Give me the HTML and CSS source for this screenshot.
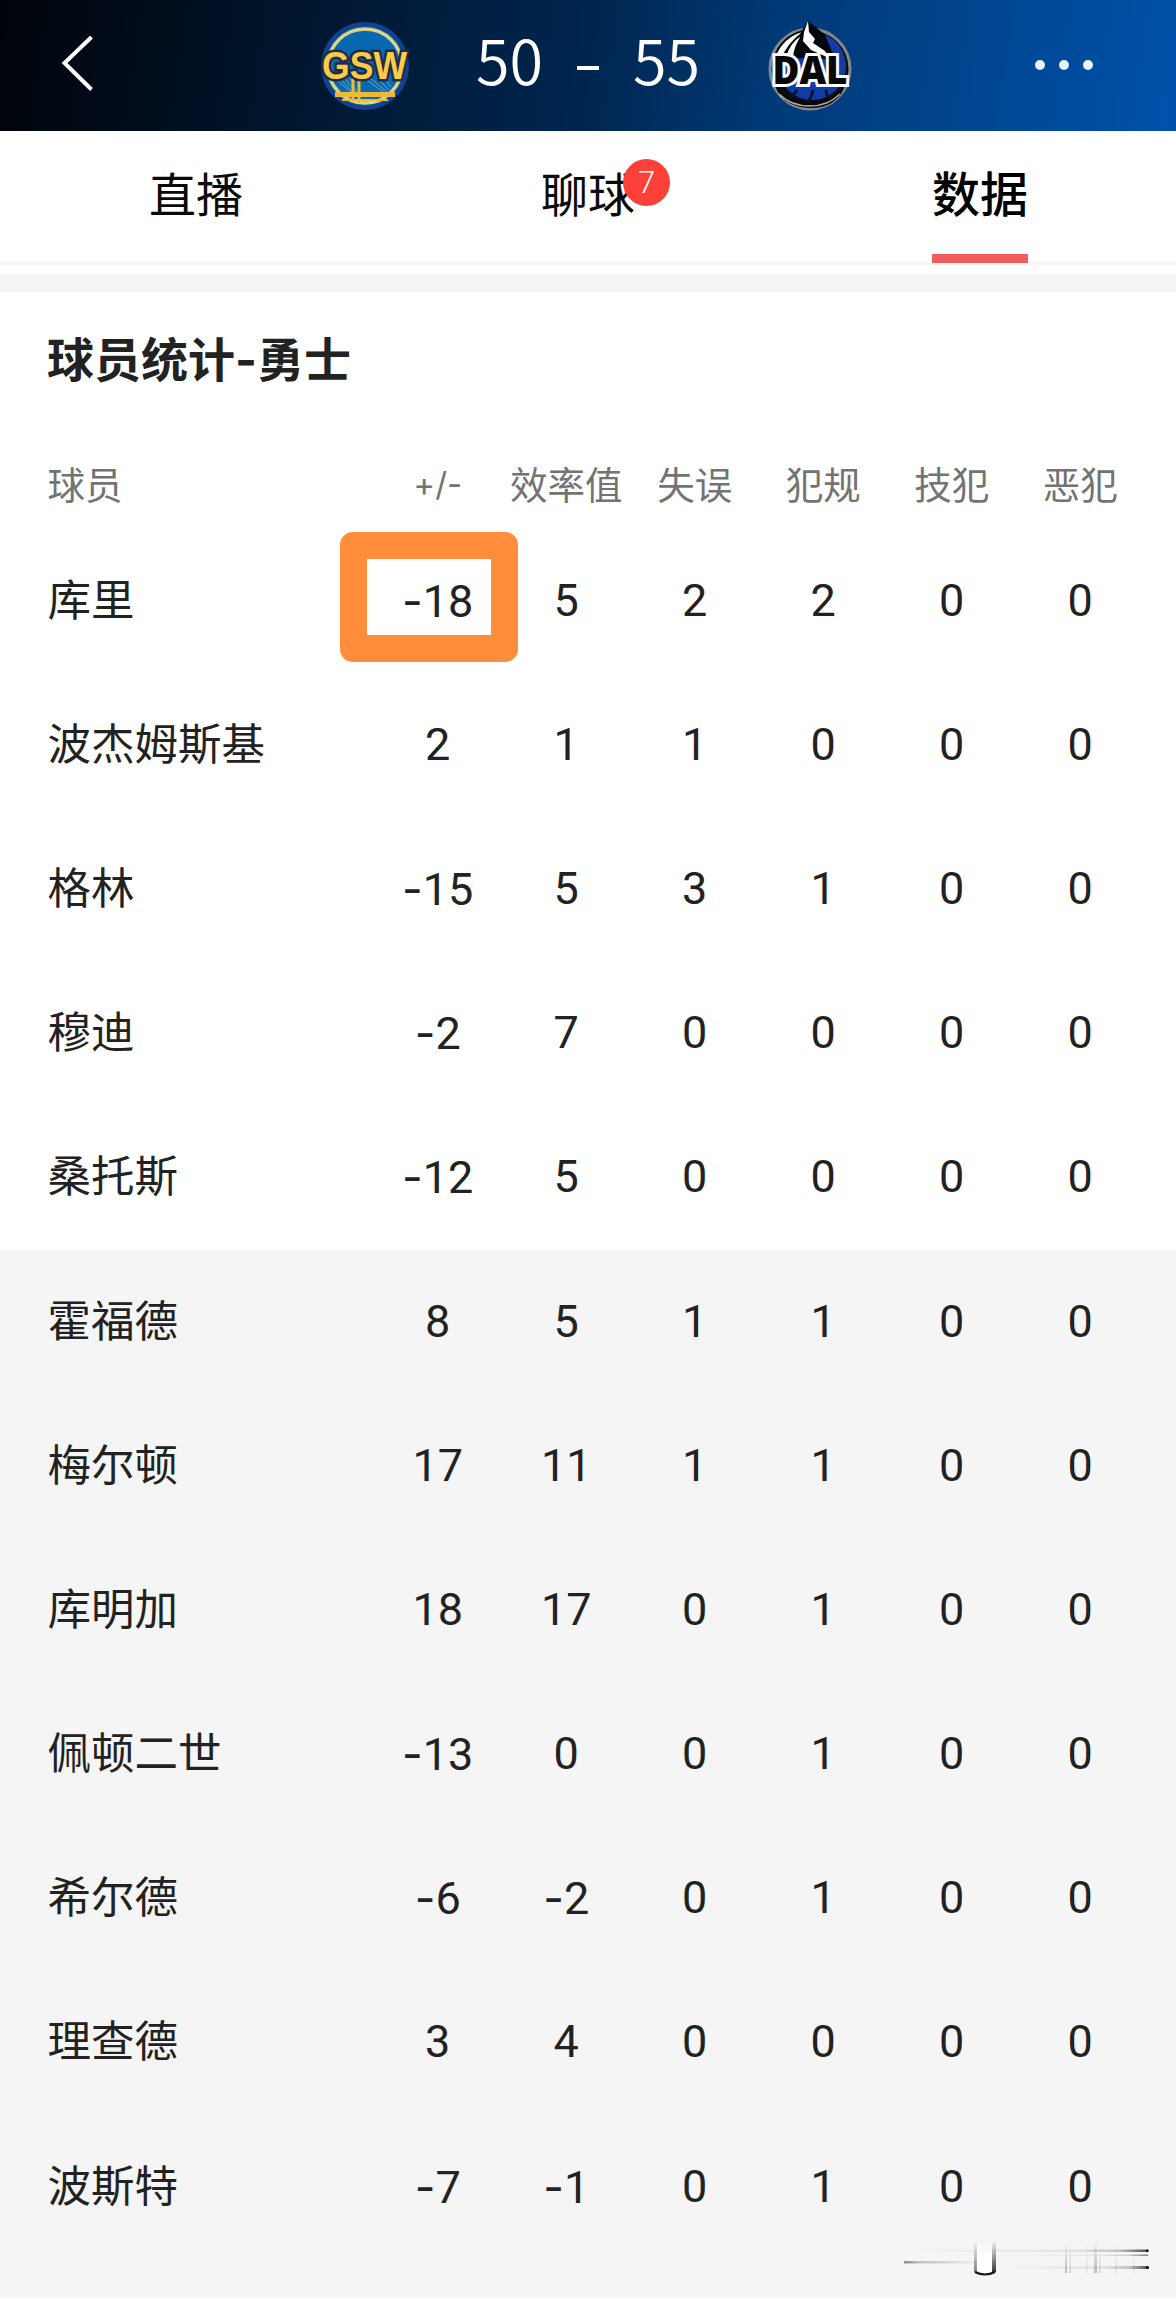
FILE: index.html
```html
<!DOCTYPE html>
<html lang="zh-CN">
<head>
  <meta charset="UTF-8">
  <meta name="viewport" content="width=device-width, initial-scale=1.0">
  <title>球员统计</title>
  <link rel="stylesheet" href="styles.css">
</head>
<body>
  <header class="topbar">
    <svg class="back" width="36" height="60" viewBox="0 0 36 60">
      <path d="M31.500 1L4.500 27L31.500 53.500" fill="none" stroke="#fff" stroke-width="4"/>
    </svg>

    <svg class="logo gsw" width="94" height="90" viewBox="-2 0 94 90">
      <circle cx="45" cy="45" r="44" fill="#0f4391"/>
      <circle cx="45" cy="45" r="40" fill="#17538d"/>
      <circle cx="45" cy="45" r="37" fill="#0869b1" stroke="#d9d58a" stroke-width="3.500"/>
      <path d="M17 59L34 74M20 57L35 74M25 57L37 74M30 57L38 74M44 57L66 73M50 57L67 71M57 57L69 69M64 57L71 66" stroke="#6da7a8" stroke-width="1"/>
      <path d="M15 71H75V76H15Z" fill="#efb938"/>
      <path d="M33 57V81M39 57V82" stroke="#efb938" stroke-width="3"/>
      <path d="M22 79H68" stroke="#efb938" stroke-width="2"/>
      <text x="44.500" y="57.500" text-anchor="middle" textLength="85" lengthAdjust="spacingAndGlyphs" class="gsw-text">GSW</text>
    </svg>

    <div class="score"><span>50</span><i class="score-dash"></i><span>55</span></div>

    <svg class="logo dal" width="86" height="92" viewBox="0 0 86 92">
      <circle cx="43" cy="49" r="40" fill="#0b0d14" stroke="#85878b" stroke-width="3"/>
      <circle cx="45" cy="46" r="34" fill="#103da4"/>
      <path d="M7 38Q13 16 36 10L39 36L18 38Z" fill="#05070e"/>
      <path d="M9 36Q16 18 35 12Q20 24 15 37ZM19 37Q23 23 34 16Q27 26 26 37Z" fill="#fff"/>
      <path d="M34 12L41 1L50 8L58 15L67 36L60 39L28 38Z" fill="#05070e"/>
      <path d="M41 1L37 12L36 21L44 30L62 38L58 31L46 23L48 19L42 12Z" fill="#fff"/>
      <path d="M46 70Q44 80 38 85M30 70Q26 77 18 80M59 70Q59 77 65 82" fill="none" stroke="#071233" stroke-width="3"/>
      <path d="M8 66Q20 81 43 82Q66 81 78 66Q70 88 43 88Q16 87 8 66Z" fill="#07080c"/>
      <path d="M12 74Q24 86 43 86Q61 86 73 74" fill="none" stroke="#b6aaa9" stroke-width="1.500"/>
      <text x="43" y="64" text-anchor="middle" textLength="75" lengthAdjust="spacingAndGlyphs" class="dal-text">DAL</text>
    </svg>

    <svg class="more" width="60" height="12" viewBox="0 0 60 12">
      <g fill="#e6f6ff">
        <circle cx="6" cy="5" r="5"/>
        <circle cx="30" cy="5" r="5"/>
        <circle cx="54" cy="5" r="5"/>
      </g>
    </svg>
  </header>

  <nav class="tabs">
    <div class="tab"><span>直播</span></div>
    <div class="tab"><span>聊球<b class="badge">7</b></span></div>
    <div class="tab active"><span>数据</span></div>
  </nav>
  <div class="divider"></div>

  <main class="stats">
    <h1>球员统计<i>-</i>勇士</h1>
    <div class="row head"><span>球员</span><span><i>+/-</i></span><span>效率值</span><span>失误</span><span>犯规</span><span>技犯</span><span>恶犯</span></div>

    <div class="starters">
      <div class="row"><span>库里</span><span class="marked"><i>-</i>18</span><span>5</span><span>2</span><span>2</span><span>0</span><span>0</span></div>
      <div class="row"><span>波杰姆斯基</span><span>2</span><span>1</span><span>1</span><span>0</span><span>0</span><span>0</span></div>
      <div class="row"><span>格林</span><span><i>-</i>15</span><span>5</span><span>3</span><span>1</span><span>0</span><span>0</span></div>
      <div class="row"><span>穆迪</span><span><i>-</i>2</span><span>7</span><span>0</span><span>0</span><span>0</span><span>0</span></div>
      <div class="row"><span>桑托斯</span><span><i>-</i>12</span><span>5</span><span>0</span><span>0</span><span>0</span><span>0</span></div>
    </div>

    <div class="bench">
      <div class="row"><span>霍福德</span><span>8</span><span>5</span><span>1</span><span>1</span><span>0</span><span>0</span></div>
      <div class="row"><span>梅尔顿</span><span>17</span><span>11</span><span>1</span><span>1</span><span>0</span><span>0</span></div>
      <div class="row"><span>库明加</span><span>18</span><span>17</span><span>0</span><span>1</span><span>0</span><span>0</span></div>
      <div class="row"><span>佩顿二世</span><span><i>-</i>13</span><span>0</span><span>0</span><span>1</span><span>0</span><span>0</span></div>
      <div class="row"><span>希尔德</span><span><i>-</i>6</span><span><i>-</i>2</span><span>0</span><span>1</span><span>0</span><span>0</span></div>
      <div class="row"><span>理查德</span><span>3</span><span>4</span><span>0</span><span>0</span><span>0</span><span>0</span></div>
      <div class="row"><span>波斯特</span><span><i>-</i>7</span><span><i>-</i>1</span><span>0</span><span>1</span><span>0</span><span>0</span></div>

      <!-- faded strokes in the corner -->
      <svg class="smear" width="250" height="36" viewBox="0 0 250 36">
        <defs>
          <linearGradient id="toRight"><stop offset="0" stop-color="#222" stop-opacity="0"/><stop offset=".7" stop-color="#222" stop-opacity=".08"/><stop offset=".88" stop-color="#222" stop-opacity=".25"/><stop offset="1" stop-color="#111" stop-opacity=".75"/></linearGradient>
          <linearGradient id="toLeft"><stop offset="0" stop-color="#222" stop-opacity=".5"/><stop offset=".15" stop-color="#222" stop-opacity=".25"/><stop offset=".8" stop-color="#222" stop-opacity="0"/></linearGradient>
          <linearGradient id="down" x2="0" y2="1"><stop offset="0" stop-color="#222" stop-opacity="0"/><stop offset="1" stop-color="#111" stop-opacity=".85"/></linearGradient>
          <linearGradient id="inner" x2="0" y2="1"><stop offset="0" stop-color="#fff" stop-opacity="0"/><stop offset=".5" stop-color="#fff"/></linearGradient>
        </defs>
        <rect x="4" y="9.500" width="244" height="2.500" fill="url(#toRight)"/>
        <rect x="80" y="14.500" width="168" height="1.500" fill="url(#toRight)" opacity=".7"/>
        <rect x="100" y="26" width="148" height="3" fill="url(#toRight)"/>
        <circle cx="247.500" cy="10.800" r="1.200"/>
        <circle cx="247.500" cy="27.500" r="1.500"/>
        <rect x="4" y="21" width="100" height="2.500" fill="url(#toLeft)"/>
        <rect x="76" y="1" width="18" height="32" fill="url(#inner)"/>
        <rect x="74" y="1" width="3" height="31" fill="url(#down)" opacity=".6"/>
        <rect x="92" y="1" width="4" height="31" fill="url(#down)"/>
        <path d="M75 32Q85 37 95 32" fill="none" stroke="#111" stroke-width="2"/>
        <g fill="url(#down)">
          <rect x="165" y="1" width="2" height="32" opacity=".3"/>
          <rect x="169.500" y="1" width="1.500" height="32" opacity=".2"/>
          <rect x="186" y="1" width="2" height="32" opacity=".08"/>
          <rect x="194" y="1" width="3" height="32" opacity=".3"/>
          <rect x="199" y="1" width="2" height="32" opacity=".12"/>
          <rect x="215" y="1" width="2" height="32" opacity=".08"/>
          <rect x="233" y="1" width="2" height="32" opacity=".08"/>
        </g>
      </svg>
    </div>
  </main>
</body>
</html>
```
FILE: styles.css
```css
*,
*::after {
  box-sizing: border-box;
}

body {
  margin: 0;
  height: 2300px;
  overflow: hidden;
  background-color: #ffffff;
  color: #222222;
  font-family: Roboto, "Noto Sans CJK SC", sans-serif;
}

i {
  font-style: normal;
}

.topbar {
  display: flex;
  align-items: center;
  height: 131px;
  padding: 0 82px 0 60px;
  background: linear-gradient(99deg, #000309 0%, #000d1c 13%, #001a38 32%, #00264f 50%, #003a78 66%, #00458f 82%, #0052ab 100%);
}

.logo {
  flex: none;
  overflow: visible;
}

.gsw {
  margin-left: 222px;
}

.gsw-text {
  font-family: "Liberation Sans", Arial, sans-serif;
  font-size: 38px;
  font-weight: bold;
  fill: #ffcb45;
  stroke: #1d2b4d;
  stroke-width: 5px;
  paint-order: stroke;
}

.score {
  display: flex;
  align-items: center;
  margin-left: 64px;
  width: 224px;
  justify-content: space-between;
  color: #ffffff;
  font-family: "Noto Sans CJK SC", sans-serif;
  font-size: 61px;
  font-weight: 350;
  line-height: 90px;
}

.score span {
  margin-top: -14px;
}

.score-dash {
  width: 22px;
  height: 4px;
  margin-top: 5px;
  background-color: #ffffff;
}

.dal {
  margin-left: 67px;
}

.dal-text {
  font-family: "Open Sans", sans-serif;
  font-size: 38px;
  font-weight: 800;
  fill: #080808;
  stroke: #ffffff;
  stroke-width: 6px;
  paint-order: stroke;
}

.more {
  margin-left: auto;
}

.tabs {
  display: flex;
  height: 134px;
  border-bottom: 3px solid #f5f5f5;
}

.tab {
  flex: 1;
  display: flex;
  justify-content: center;
  color: #0a0a0a;
  font-size: 47px;
  font-weight: 400;
  line-height: 130px;
}

.tab span {
  position: relative;
}

.tab.active {
  font-size: 48px;
  font-weight: 500;
  color: #000000;
}

.tab.active span {
  height: 132px;
  border-bottom: 9px solid #f35c5c;
}

.badge {
  position: absolute;
  left: 82px;
  top: 28px;
  width: 47px;
  height: 47px;
  border-radius: 50%;
  background-color: #ff4038;
  color: #ffffff;
  font-size: 31px;
  font-weight: 300;
  line-height: 47px;
  text-align: center;
}

.divider {
  height: 18px;
  margin-top: 9px;
  background-color: #f3f4f6;
}

h1 {
  margin: 0;
  padding: 30px 47px 0;
  height: 148px;
  font-family: "Noto Sans CJK SC", sans-serif;
  font-size: 47px;
  font-weight: bold;
  line-height: 70px;
}

h1 i {
  font-family: Inter, sans-serif;
}

.row {
  display: grid;
  grid-template-columns: 326px repeat(6, 128.5px);
  align-items: center;
  height: 144.2px;
  padding-left: 47.5px;
  font-size: 45px;
  text-align: center;
}

.row span {
  padding-bottom: 2px;
}

.row span:first-child {
  padding-bottom: 8px;
  font-size: 43.5px;
  text-align: left;
}

.row i {
  font-family: Inter, sans-serif;
}

.row.head {
  height: 89px;
  color: #737373;
  font-size: 37.5px;
}

.row.head span,
.row.head span:first-child {
  padding-bottom: 4px;
  font-size: 37.5px;
}

.row.head i {
  font-size: 33px;
}

.marked {
  position: relative;
}

/* hand-drawn box round the value */
.marked::after {
  content: "";
  position: absolute;
  left: -34px;
  top: 50%;
  width: 178px;
  height: 130px;
  margin-top: -69px;
  border: 27px solid #ff8d3b;
  border-radius: 13px;
}

.bench {
  height: 1048px;
  background-color: #f5f5f5;
}

.smear {
  display: block;
  margin: -19px 0 0 900px;
}
```
